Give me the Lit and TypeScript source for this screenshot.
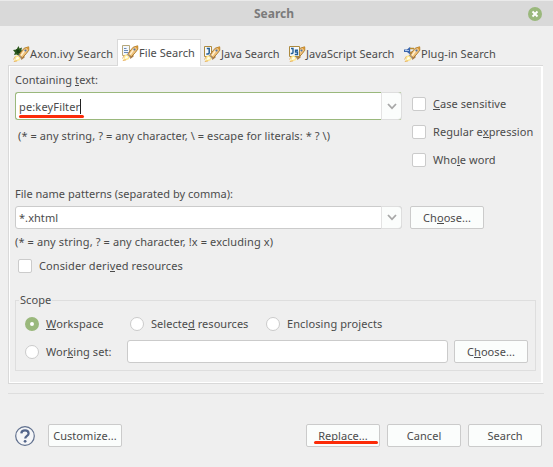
import { LitElement, html, css, svg } from "lit";
import { customElement, property } from "lit/decorators.js";

type Glyph = "ivy" | "file" | "java" | "js" | "plugin";

/** Rocket with a small badge that tells the search pages apart. */
@customElement("search-icon")
class SearchIcon extends LitElement {
  @property() kind: Glyph = "file";
  static styles = css`
    :host { display: block; width: 17px; height: 16px; flex: none; }
    svg { display: block; overflow: visible; }
  `;
  badge() {
    switch (this.kind) {
      case "ivy":
        return svg`<path d="M5.5 0 6.5 2.5 9 1.5 8.4 4 10 6 7 7 6 10 3.5 8.5 1 9 2 6.5 0 4 3.5 3.5Z" fill="#2d5a1d"/><path d="M3 3 6 4 7 7 4 7Z" fill="#173f12"/>`;
      case "file":
        return svg`<path d="M.5.5h7v10h-7Z" fill="#f3f7fc" stroke="#b5a77b"/><path d="M2 3.5h2.5M2 5.5h4M2 7.5h4" stroke="#6b8dba"/>`;
      case "java":
        return svg`<path d="M.5.5h7v10h-7Z" fill="#f5f9fd" stroke="#ad8a3e"/><path d="M2.8 2.5h2.4v4.3q0 1.4-2.9 1.2" fill="none" stroke="#235f96" stroke-width="1.5"/>`;
      case "js":
        return svg`<path d="M.5.5h10v10H.5Z" fill="#f5f9fd" stroke="#ad8a3e"/><path d="M2 2.5h2v4q0 1.2-2.3 1M9 4.2H6.5V6h2v2.5H5.8" fill="none" stroke="#235f96" stroke-width="1.4"/>`;
      default:
        return svg`<path d="M0 3.5h3L6.2.8v7.8L3 6H0Z" fill="#3b66ad"/><path d="M1 4.5h4" stroke="#a9c5ed"/><path d="M6 2.5h4M6 6.5h3" stroke="#b98b2e" stroke-width="1.3"/>`;
    }
  }
  render() {
    return html`<svg width="17" height="16" viewBox="0 0 17 16">
      <path d="M5 6.5 9 5 9 9Z" fill="#a58565"/>
      ${this.kind === "js" ? "" : this.badge()}
      <path d="M5.2 8.2 9 5.5 11 7.5Z" fill="#8d7462"/>
      <path d="M11.2 7.7 11.6 11.5 8.2 14 8 10.8Z" fill="#a87d4c"/>
      <path d="M6.3 9.2 8 6 11.2 2.2 15.7.8 15.8 4.2 13.2 7.7 9.3 11.8Z" fill="#efc17c" stroke="#a97929" stroke-width=".9"/>
      <path d="M7.4 8.9 11.4 3.7 12.6 4.2 8.7 9.9Z" fill="#fff0d0"/>
      <path d="m13.2 1.6 2.4-.6-.1 3Z" fill="#d9932a"/>
      <circle cx="12.4" cy="4.5" r="1.1" fill="#5074a7"/>
      <path d="M5.2 8.5 8.8 12 7.6 12.7 4.5 9.3Z" fill="#9a8c91"/>
      ${this.kind === "js" ? this.badge() : ""}
      <path d="M1.2 15.5 2.4 10 4.8 9.3 7.7 12.2 6.4 14.6Z" fill="#ffe98f"/>
      <path d="M2.6 14 3.7 11 5.5 11 6 13Z" fill="#fffef0"/>
      <path d="M.5 13.5 2.3 10.3M.8 15.5l3.4-.6" stroke="#e2a34a" stroke-width=".8"/>
    </svg>`;
  }
}

@customElement("app-root")
class AppRoot extends LitElement {
  static styles = css`
    * { box-sizing: border-box; }
    :host {
      display: flex; flex-direction: column; width: 553px; height: 467px; overflow: hidden;
      background: #efefef; color: #4b4b4b;
      font: 11px/16px "Noto Sans", sans-serif; white-space: nowrap; letter-spacing: .06px;
      border-right: 1px solid #fff;
    }
    u { text-decoration: none; box-shadow: inset 0 -1px #4b4b4b; display: inline-block; height: 14px; line-height: 16px; vertical-align: top; }
    .title {
      height: 26px; flex: none; display: grid; grid-template-columns: 24px 1fr 24px; align-items: center;
      background: #d9d9d9; border-top: 1px solid #eaeaea; color: #7b7b7b;
      font-weight: 700; font-size: 12px; letter-spacing: 0; text-align: center; padding: 0 5px 0 0;
    }
    .title svg { display: block; margin-left: 4px; }
    .tabs { display: flex; height: 26px; margin: 13px 0 0 8px; flex: none; align-items: flex-start; }
    .tab { display: flex; height: 26px; padding-top: 7px; }
    .tab.t0 { width: 109px; padding-left: 5px; letter-spacing: .16px; }
    .tab.t1 { width: 84px; height: 27px; padding: 5px 0 0 4px; background: #fff; border: 1px solid #d9d9d9; border-bottom: 0; z-index: 1; }
    .tab.t2 { width: 86px; padding-left: 3px; letter-spacing: 0; }
    .tab.t3 { width: 115px; padding-left: 2px; letter-spacing: .02px; }
    .tab.t4 { padding-left: 2px; }
    .panel {
      height: 319px; width: 535px; margin-left: 8px; flex: none; padding: 6px 4px 0 5px;
      border: 1px solid #d9d9d9; border-right: 0; box-shadow: inset 1px 1px #fff, inset -2px -1px #fff;
      display: flex; flex-direction: column;
    }
    .cols { display: flex; height: 103px; padding-left: 1px; }
    .left { width: 397px; }
    .label { height: 16px; }
    .field { display: flex; width: 387px; border-radius: 3px; height: 24px; background: #fff; border: 1px solid #cbcbcb; }
    .field span { flex: 1; padding-left: 3px; line-height: 21px; }
    .field i { width: 20px; background: #fbfdfc; border-left: 1px solid #e3e3e3; display: grid; place-items: center; border-radius: 0 3px 3px 0; box-shadow: 0 -1px #dedede, 0 1px #dedede, 1px 0 #dedede; }
    .field.focus { height: 28px; margin-top: 4px; border-color: #9ab87c; border-right-color: #dedede; }
    .field.focus span { line-height: 27px; display: flex; align-items: center; position: relative; letter-spacing: .15px; }
    .caret { width: 1px; height: 15px; background: #222; }
    .mark { position: absolute; height: 3px; border-radius: 2px; background: #fc2b08; }
    .field .mark { left: 3px; top: 22px; width: 65px; }
    .hint { margin: 8px 0 0 3px; letter-spacing: .08px; }
    .opts { padding-top: 24px; display: flex; flex-direction: column; gap: 12px; }
    .opt { display: flex; height: 16px; align-items: center; gap: 7px; }
    .box { width: 14px; height: 14px; background: #fff; border: 1px solid #cbcbcb; border-radius: 2px; flex: none; }
    .box.round { border-radius: 50%; }
    .box.on { border: 5px solid #9ab87c; }
    .btn { width: 74px; height: 23px; border: 1px solid #cbcbcb; border-radius: 2px; background: #fbfdfc; text-align: center; line-height: 22px; position: relative; flex: none; }
    .btn u { margin-top: 3px; }
    .pattern { padding: 11px 0 0 1px; }
    .pattern > .label:first-child { letter-spacing: .02px; }
    .row { display: flex; gap: 8px; margin-top: 4px; }
    .row .field, .working .field { height: 23px; }
    .pattern .hint2 { margin-top: 5px; letter-spacing: .11px; }
    .derived { margin: 8px 0 0 3px; letter-spacing: .11px; }
    .scope { position: relative; width: 521px; height: 71px; margin: 26px 0 0 1px; border: 1px solid #dedede; padding: 15px 7px 0 9px; }
    .legend { position: absolute; left: 3px; top: -9px; background: #efefef; padding: 0 1px; }
    .radios { display: flex; }
    .radios .opt:nth-child(1) { width: 105px; }
    .radios .opt:nth-child(2) { width: 136px; letter-spacing: .04px; }
    .radios .opt:nth-child(3) { letter-spacing: .1px; }
    .working { display: flex; margin-top: 8px; }
    .working .opt { width: 102px; margin-top: 4px; }
    .working .field { width: 321px; margin-right: 6px; }
    .working .opt, .working .field { flex: none; }
    .rule { height: 1px; flex: none; margin: 9px 9px 0 8px; background: #dedede; }
    .foot { display: flex; margin: 30px 10px 0 15px; align-items: center; gap: 7px; }
    .help { width: 20px; height: 22px; margin-right: 6px; }
    .gap { flex: 1; }
    .foot { margin-right: 11px; }
    .btn .mark { left: 7px; top: 16px; width: 64px; }
  `;
  chevron() {
    return html`<i><svg width="10" height="7" viewBox="0 0 10 7"><path d="m1 1 4 4.3L9 1" fill="none" stroke="#a7a7a7" stroke-width="1.8"/></svg></i>`;
  }
  render() {
    const tabs: [Glyph, string][] = [
      ["ivy", "Axon.ivy Search"], ["file", "File Search"], ["java", "Java Search"],
      ["js", "JavaScript Search"], ["plugin", "Plug-in Search"],
    ];
    return html`
      <div class="title"><b></b><span>Search</span>
        <svg width="14" height="14" viewBox="0 0 14 14"><circle cx="7" cy="7" r="7" fill="#9ab87c"/><path d="m4.5 4.5 5 5m0-5-5 5" stroke="#fff" stroke-width="1.9"/></svg>
      </div>
      <div class="tabs">${tabs.map(([k, t], i) => html`<div class="tab t${i}"><search-icon .kind=${k}></search-icon><span>${t}</span></div>`)}</div>
      <div class="panel">
        <div class="cols">
          <div class="left">
            <div class="label">Containing <u>t</u>ext:</div>
            <div class="field focus"><span>pe:keyFilter<b class="caret"></b><b class="mark"></b></span>${this.chevron()}</div>
            <div class="label hint">(* = any string, ? = any character, \\ = escape for literals: * ? \\)</div>
          </div>
          <div class="opts">
            <div class="opt"><b class="box"></b><span><u>C</u>ase sensitive</span></div>
            <div class="opt"><b class="box"></b><span>Regular e<u>x</u>pression</span></div>
            <div class="opt"><b class="box"></b><span>Who<u>l</u>e word</span></div>
          </div>
        </div>
        <div class="pattern">
          <div class="label">File name patterns (separated by comma):</div>
          <div class="row"><div class="field"><span>*.xhtml</span>${this.chevron()}</div><div class="btn">Ch<u>o</u>ose...</div></div>
          <div class="label hint2">(* = any string, ? = any character, !x = excluding x)</div>
          <div class="opt derived"><b class="box"></b><span>Consider deri<u>v</u>ed resources</span></div>
        </div>
        <div class="scope"><div class="legend">Scope</div>
          <div class="radios">
            <div class="opt"><b class="box round on"></b><span><u>W</u>orkspace</span></div>
            <div class="opt"><b class="box round"></b><span>Selecte<u>d</u> resources</span></div>
            <div class="opt"><b class="box round"></b><span>Enclosing projects</span></div>
          </div>
          <div class="working">
            <div class="opt"><b class="box round"></b><span>Wor<u>k</u>ing set:</span></div>
            <div class="field"></div><div class="btn">C<u>h</u>oose...</div>
          </div>
        </div>
      </div>
      <div class="rule"></div>
      <div class="foot">
        <svg class="help" viewBox="0 0 20 22"><circle cx="10" cy="11" r="9.3" fill="#f5f6f8" stroke="#60708e" stroke-width="1.2"/><path d="M6.3 8.3Q6.5 5.4 10 5.4T13.6 8.4C13.6 10.8 10.2 10.8 10.2 13.6" fill="none" stroke="#53658a" stroke-width="2.2"/><circle cx="10.1" cy="16.3" r="1.4" fill="#53658a"/></svg>
        <div class="btn">Customize...</div><div class="gap"></div>
        <div class="btn">Replace...<b class="mark"></b></div><div class="btn">Cancel</div><div class="btn">Search</div>
      </div>`;
  }
}
